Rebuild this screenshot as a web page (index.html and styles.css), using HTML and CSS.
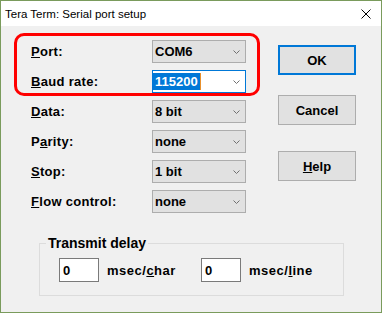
FILE: index.html
```html
<!DOCTYPE html>
<html>
<head>
    <title>Tera Term: Serial port setup</title>
    <link rel="stylesheet" href="styles.css">
</head>
<body>
    <div class="window">
        <div class="titlebar">
            <span class="title">Tera Term: Serial port setup</span>
            <svg class="close" width="10" height="10" viewBox="0 0 10 10">
                <path d="M0.5 0.5 L9.5 9.5 M9.5 0.5 L0.5 9.5" stroke="#000" stroke-width="1" fill="none"/>
            </svg>
        </div>
        <div class="dialog">
            <div class="top">
                <div class="fields">
                    <!-- red marker drawn round the two fields that matter -->
                    <div class="highlight">
                        <div class="row">
                            <label><u>P</u>ort:</label>
                            <div class="combo">
                                <span>COM6</span>
                                <svg class="chev" width="7" height="4" viewBox="0 0 7 4"><polyline points="0.5,0.5 3.5,3.5 6.5,0.5" fill="none" stroke="#707070"/></svg>
                            </div>
                        </div>
                        <div class="row">
                            <label><u>B</u>aud rate:</label>
                            <div class="combo active">
                                <span class="sel">115200</span><i class="caret"></i>
                                <svg class="chev" width="7" height="4" viewBox="0 0 7 4"><polyline points="0.5,0.5 3.5,3.5 6.5,0.5" fill="none" stroke="#707070"/></svg>
                            </div>
                        </div>
                    </div>
                    <div class="rows">
                        <div class="row">
                            <label><u>D</u>ata:</label>
                            <div class="combo">
                                <span>8 bit</span>
                                <svg class="chev" width="7" height="4" viewBox="0 0 7 4"><polyline points="0.5,0.5 3.5,3.5 6.5,0.5" fill="none" stroke="#707070"/></svg>
                            </div>
                        </div>
                        <div class="row">
                            <label>P<u>a</u>rity:</label>
                            <div class="combo">
                                <span>none</span>
                                <svg class="chev" width="7" height="4" viewBox="0 0 7 4"><polyline points="0.5,0.5 3.5,3.5 6.5,0.5" fill="none" stroke="#707070"/></svg>
                            </div>
                        </div>
                        <div class="row">
                            <label><u>S</u>top:</label>
                            <div class="combo">
                                <span>1 bit</span>
                                <svg class="chev" width="7" height="4" viewBox="0 0 7 4"><polyline points="0.5,0.5 3.5,3.5 6.5,0.5" fill="none" stroke="#707070"/></svg>
                            </div>
                        </div>
                        <div class="row">
                            <label><u>F</u>low control:</label>
                            <div class="combo">
                                <span>none</span>
                                <svg class="chev" width="7" height="4" viewBox="0 0 7 4"><polyline points="0.5,0.5 3.5,3.5 6.5,0.5" fill="none" stroke="#707070"/></svg>
                            </div>
                        </div>
                    </div>
                </div>
                <div class="buttons">
                    <button class="btn default">OK</button>
                    <button class="btn cancel">Cancel</button>
                    <button class="btn help"><u>H</u>elp</button>
                </div>
            </div>
            <fieldset class="group">
                <legend>Transmit delay</legend>
                <div class="delay">
                    <input class="num" type="text" value="0">
                    <span class="unit">msec/<u>c</u>har</span>
                    <input class="num" type="text" value="0">
                    <span class="unit">msec/<u>l</u>ine</span>
                </div>
            </fieldset>
        </div>
    </div>
</body>
</html>
```

FILE: styles.css
```css
body {
    margin: 0;
    font-family: "Liberation Sans", Arial, sans-serif;
}

.window {
    width: 382px;
    height: 313px;
    box-sizing: border-box;
    border: 1px solid #7a9b5c;
    display: flex;
    flex-direction: column;
    background-color: #f0f0f0;
}

.titlebar {
    height: 25px;
    background-color: #fff;
    display: flex;
    align-items: center;
    justify-content: space-between;
    padding: 0 10px 0 4px;
}

.title {
    font-size: 11.5px;
    color: #000;
}

.close {
    display: block;
}

.dialog {
    flex: 1;
    padding: 7px 0 0 13px;
    font-size: 13px;
    font-weight: bold;
    color: #000;
}

.top {
    display: flex;
}

.fields {
    width: 246px;
}

.highlight {
    border: 3px solid #f00;
    border-radius: 10px;
    padding: 4px 0 0 14px;
    display: flex;
    flex-direction: column;
    gap: 7px;
}

.rows {
    margin-top: 4px;
    padding-left: 17px;
    display: flex;
    flex-direction: column;
    gap: 7px;
}

.row {
    display: flex;
    align-items: center;
    height: 23px;
}

.row label {
    width: 121px;
    letter-spacing: 0.3px;
}

.combo {
    width: 94px;
    height: 23px;
    box-sizing: border-box;
    border: 1px solid #adadad;
    background-color: #e1e1e1;
    display: flex;
    align-items: center;
    padding: 0 5px 0 2px;
}

.combo .chev {
    margin-left: auto;
}

.combo.active {
    background-color: #fff;
    border-color: #0078d7;
    padding-left: 0;
}

.sel {
    background-color: #0078d7;
    color: #fff;
    line-height: 17px;
    padding: 0 2px;
}

.caret {
    width: 1px;
    height: 17px;
    background-color: #e8902c;
}

.buttons {
    margin-left: 18px;
    padding-top: 12px;
    display: flex;
    flex-direction: column;
}

.btn {
    width: 78px;
    height: 30px;
    box-sizing: border-box;
    border: 1px solid #adadad;
    background-color: #e1e1e1;
    font-family: inherit;
    font-size: 13px;
    font-weight: bold;
    color: #000;
    padding: 0;
}

.btn.default {
    border: 2px solid #0078d7;
}

.btn.cancel {
    margin-top: 20px;
}

.btn.help {
    margin-top: 26px;
}

.group {
    margin: 22px 0 0 25px;
    width: 305px;
    box-sizing: border-box;
    border: 1px solid #dcdcdc;
    padding: 7px 0 13px 0;
}

.group legend {
    font-size: 14px;
    line-height: 16px;
    margin-left: 6px;
    padding: 0 2px;
}

.delay {
    display: flex;
    align-items: center;
    padding-left: 19px;
}

.num {
    width: 40px;
    height: 24px;
    box-sizing: border-box;
    border: 1px solid #7a7a7a;
    background-color: #fff;
    font-family: inherit;
    font-size: 13px;
    font-weight: bold;
    padding: 0 0 0 3px;
    margin: 0;
}

.unit {
    width: 94px;
    margin-left: 8px;
    letter-spacing: 0.5px;
}
```
